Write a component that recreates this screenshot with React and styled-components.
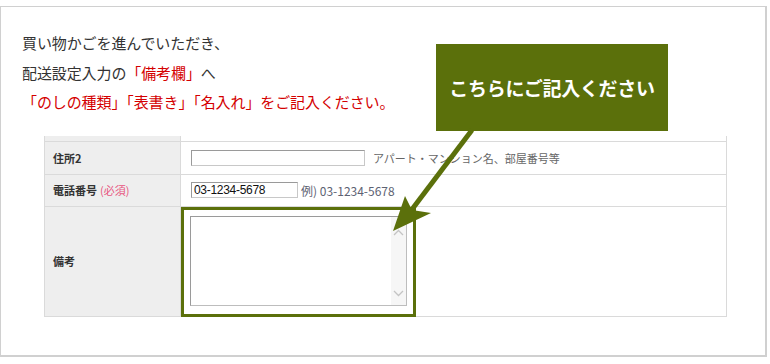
import React from 'react';
import styled, { createGlobalStyle } from 'styled-components';

const GREEN = '#5b700b';

const GlobalStyle = createGlobalStyle`
  html, body {
    margin: 0;
    padding: 0;
    background: #fff;
    font-family: "Noto Sans CJK JP", "Noto Sans", sans-serif;
  }
`;

const Frame = styled.div`
  position: relative;
  box-sizing: border-box;
  margin-top: 6px;
  width: 767px;
  height: 351px;
  border: 1px solid #d0d0d0;
  border-right-width: 2px;
  border-bottom-width: 2px;
  padding: 21px 0 0 21px;
`;

const Lead = styled.p`
  margin: 0;
  font-size: 15px;
  line-height: 29.5px;
  color: #333;
  letter-spacing: -0.1px;
`;

const Red = styled.span`
  color: #d40000;
`;

const Table = styled.div`
  margin: 19px 0 0 22px;
  width: 681px;
  display: grid;
  grid-template-columns: 136px 1fr;
  border: 1px solid #dadada;
  border-top: none;
  font-size: 11px;
  color: #333;
`;

const Label = styled.div`
  background: #eeeeee;
  border-right: 1px solid #dadada;
  border-top: ${({ $top }) => ($top ? 'none' : '1px solid #dadada')};
  height: ${({ $h }) => $h}px;
  display: flex;
  align-items: center;
  padding-left: 8px;
  font-weight: 600;
`;

const Value = styled.div`
  border-top: ${({ $top }) => ($top ? 'none' : '1px solid #dadada')};
  height: ${({ $h }) => $h}px;
  display: flex;
  align-items: center;
  padding-left: ${({ $flush }) => ($flush ? 0 : 10)}px;
  gap: ${({ $gap }) => $gap ?? 8}px;
  color: #666;
`;

const Required = styled.span`
  color: #e8557f;
  font-weight: 400;
  margin-left: 3px;
`;

const Input = styled.div`
  box-sizing: border-box;
  width: ${({ $w }) => $w}px;
  height: 16px;
  border: 1px solid #9a9a9a;
  border-right-color: #c8c8c8;
  border-bottom-color: #c8c8c8;
  background: #fff;
  font-family: "Liberation Sans", Arial, sans-serif;
  font-size: 12px;
  line-height: 14px;
  color: #111;
  padding-left: 2px;
  letter-spacing: -0.3px;
`;

const Example = styled.span`
  color: #5d6272;
  font-size: 12px;
  margin-left: -3px;
`;

const Highlight = styled.div`
  box-sizing: border-box;
  align-self: flex-start;
  width: 235px;
  height: 110px;
  border: 3px solid ${GREEN};
  padding: 6px;
  position: relative;
  z-index: 1;
`;

const TextArea = styled.div`
  box-sizing: border-box;
  height: 90px;
  border: 1px solid #9a9a9a;
  border-right-color: #bdbdbd;
  border-bottom-color: #bdbdbd;
  display: flex;
  justify-content: flex-end;
  background: #fff;
`;

const ScrollBar = styled.div`
  width: 15px;
  background: #f6f6f6;
  display: flex;
  flex-direction: column;
  justify-content: space-between;
  align-items: center;
  padding: 12px 0 8px;
`;

const Callout = styled.div`
  position: absolute;
  left: 435px;
  top: 37px;
  width: 232px;
  height: 87px;
  background: ${GREEN};
  color: #fff;
  font-weight: 700;
  font-size: 19px;
  letter-spacing: -0.3px;
  display: flex;
  align-items: center;
  justify-content: center;
`;

const Arrow = styled.svg`
  position: absolute;
  left: -1px;
  top: -7px;
  width: 770px;
  height: 364px;
  pointer-events: none;
  z-index: 2;
`;

const Chevron = ({ up }) => (
  <svg width="11" height="7" viewBox="0 0 11 7">
    <path
      d={up ? 'M1 6 L5.5 1.5 L10 6' : 'M1 1 L5.5 5.5 L10 1'}
      fill="none"
      stroke="#c4c4c4"
      strokeWidth="1.3"
    />
  </svg>
);

function App() {
  return (
    <>
      <GlobalStyle />
      <Frame>
        <Lead>買い物かごを進んでいただき、</Lead>
        <Lead>
          配送設定入力の<Red>「備考欄」</Red>へ
        </Lead>
        <Lead>
          <Red>「のしの種類」「表書き」「名入れ」をご記入ください。</Red>
        </Lead>

        <Table>
          <Label $top $h={5} />
          <Value $top $h={5} />

          <Label $h={32}>住所2</Label>
          <Value $h={32}>
            <Input $w={174} />
            <span>アパート・マンション名、部屋番号等</span>
          </Value>

          <Label $h={31}>
            電話番号<Required>(必須)</Required>
          </Label>
          <Value $h={31} $gap={6}>
            <Input $w={107}>03-1234-5678</Input>
            <Example>例) 03-1234-5678</Example>
          </Value>

          <Label $h={109}>備考</Label>
          <Value $h={109} $flush>
            <Highlight>
              <TextArea>
                <ScrollBar>
                  <Chevron up />
                  <Chevron />
                </ScrollBar>
              </TextArea>
            </Highlight>
          </Value>
        </Table>

        <Callout>こちらにご記入ください</Callout>

        <Arrow viewBox="0 0 770 364">
          <line x1="472" y1="130" x2="410" y2="212" stroke={GREEN} strokeWidth="5" />
          <polygon points="393,231 405,196 412,210 431,213" fill={GREEN} />
        </Arrow>
      </Frame>
    </>
  );
}

export default App;
